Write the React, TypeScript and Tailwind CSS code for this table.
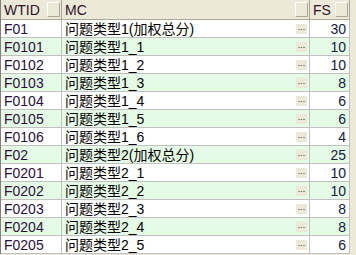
const rows = [
  { id: 'F01', mc: '问题类型1(加权总分)', fs: 30 },
  { id: 'F0101', mc: '问题类型1_1', fs: 10 },
  { id: 'F0102', mc: '问题类型1_2', fs: 10 },
  { id: 'F0103', mc: '问题类型1_3', fs: 8 },
  { id: 'F0104', mc: '问题类型1_4', fs: 6 },
  { id: 'F0105', mc: '问题类型1_5', fs: 6 },
  { id: 'F0106', mc: '问题类型1_6', fs: 4 },
  { id: 'F02', mc: '问题类型2(加权总分)', fs: 25 },
  { id: 'F0201', mc: '问题类型2_1', fs: 10 },
  { id: 'F0202', mc: '问题类型2_2', fs: 10 },
  { id: 'F0203', mc: '问题类型2_3', fs: 8 },
  { id: 'F0204', mc: '问题类型2_4', fs: 8 },
  { id: 'F0205', mc: '问题类型2_5', fs: 6 },
];

function HeaderButton() {
  return (
    <div className="w-[13px] h-[15px] bg-[#ece9d8] border-t border-l border-white border-r border-b border-r-[#aca899] border-b-[#aca899]" />
  );
}

export default function App() {
  return (
    <div
      className="w-[356px] h-[255px] bg-[#ece9d8] overflow-hidden text-[14px] leading-none text-black"
      style={{ fontFamily: '"Liberation Sans", "Noto Sans CJK SC", sans-serif' }}
    >
      <div className="w-[350px] border-l border-[#808080]">
        {/* Header */}
        <div className="flex h-[20px] border-b border-[#aca899] bg-[#ece9d8]">
          <div className="w-[61px] flex items-center justify-between pl-[3px] pr-px border-r border-[#aca899]">
            <span className="text-[#30102a]">WTID</span>
            <HeaderButton />
          </div>
          <div className="w-[248px] flex items-center justify-between pl-[3px] pr-px border-r border-[#aca899]">
            <span className="text-[#30102a]">MC</span>
            <HeaderButton />
          </div>
          <div className="w-[40px] flex items-center justify-between pl-[3px] pr-px border-r border-[#aca899]">
            <span className="text-[#30102a]">FS</span>
            <HeaderButton />
          </div>
        </div>

        {/* Rows */}
        {rows.map((r, i) => (
          <div
            key={r.id}
            className={`flex h-[18px] border-b border-[#c0c0c0] ${i % 2 === 1 ? 'bg-[#e6fbe6]' : 'bg-white'}`}
          >
            <div className="w-[61px] flex items-center pl-[3px] border-r border-[#c0c0c0] text-[#2a1040]">
              {r.id}
            </div>
            <div className="w-[248px] flex items-center justify-between pl-[3px] pr-[2px] border-r border-[#c0c0c0]">
              <span>{r.mc}</span>
              <span className="w-[11px] h-[10px] bg-[#ece9d8] text-[9px] leading-[6px] text-[#333] flex justify-center">
                ...
              </span>
            </div>
            <div className="w-[40px] flex items-center justify-end pr-[3px] border-r border-[#c0c0c0] text-[#102040]">
              {r.fs}
            </div>
          </div>
        ))}
      </div>
    </div>
  );
}
